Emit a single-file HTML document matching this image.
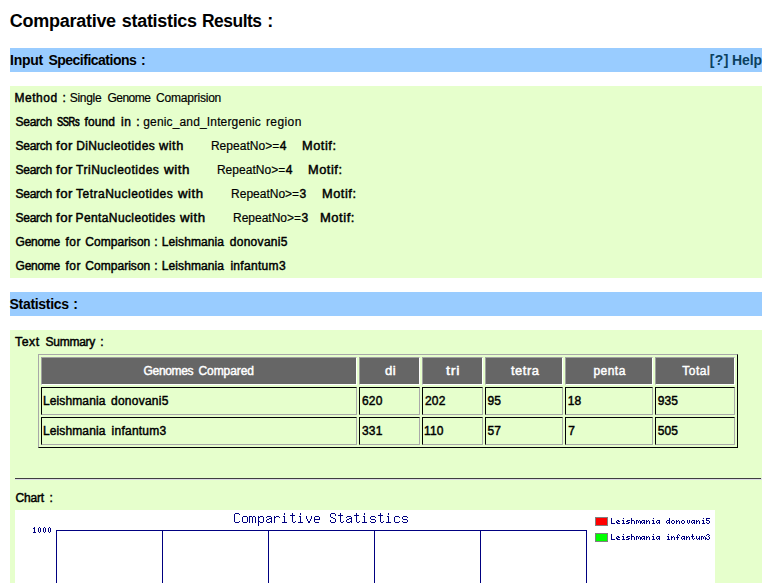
<!DOCTYPE html><html><head><meta charset="utf-8"><title>Comparative statistics Results</title><style>
html,body{margin:0;padding:0;background:#fff;}
body{width:775px;height:583px;overflow:hidden;position:relative;font-family:"Liberation Sans",sans-serif;color:#000;}
.b{position:absolute;}
.t{position:absolute;transform-origin:0 0;white-space:pre;font-weight:normal;-webkit-text-stroke:0.45px;font-size:12px;line-height:12px;}
.n{-webkit-text-stroke:0.18px;}
.f14{font-size:14px;line-height:14px;font-weight:bold;-webkit-text-stroke:0;}
.f18{font-size:18px;line-height:18px;font-weight:bold;-webkit-text-stroke:0;}
.w{color:#fff;}
.band{left:10px;width:752px;height:24px;background:#99CCFF;}
.grn{left:10px;width:752px;background:#E6FFCC;}
.c{position:absolute;box-sizing:border-box;height:28px;border:1px solid;border-color:#000 #aaa #aaa #000;}
.h{background:#666;border-color:#a0a0a0 #fff #fff #a0a0a0;}
</style></head><body>
<div class="b band" style="top:48px"></div>
<div class="b grn" style="top:86px;height:192px"></div>
<div class="b band" style="top:292px"></div>
<div class="b grn" style="top:330px;height:260px"></div>
<div class="b" style="left:38px;top:354px;width:700px;height:94px;box-sizing:border-box;border:1px solid;border-color:#a8a8a8 #000 #000 #a8a8a8"></div>
<div class="c h" style="left:41px;top:357px;width:316px"></div>
<div class="c h" style="left:359px;top:357px;width:61px"></div>
<div class="c h" style="left:422px;top:357px;width:61px"></div>
<div class="c h" style="left:485px;top:357px;width:78px"></div>
<div class="c h" style="left:565px;top:357px;width:88px"></div>
<div class="c h" style="left:655px;top:357px;width:80px"></div>
<div class="c" style="left:41px;top:387px;width:316px"></div>
<div class="c" style="left:359px;top:387px;width:61px"></div>
<div class="c" style="left:422px;top:387px;width:61px"></div>
<div class="c" style="left:485px;top:387px;width:78px"></div>
<div class="c" style="left:565px;top:387px;width:88px"></div>
<div class="c" style="left:655px;top:387px;width:80px"></div>
<div class="c" style="left:41px;top:417px;width:316px"></div>
<div class="c" style="left:359px;top:417px;width:61px"></div>
<div class="c" style="left:422px;top:417px;width:61px"></div>
<div class="c" style="left:485px;top:417px;width:78px"></div>
<div class="c" style="left:565px;top:417px;width:88px"></div>
<div class="c" style="left:655px;top:417px;width:80px"></div>
<div class="b" style="left:15px;top:478px;width:746px;height:1px;background:#404040;border-right:1px solid #dcdce4;border-bottom:1px solid #dcdce4"></div>
<svg class="b" style="left:15px;top:510px" width="700" height="73" viewBox="0 0 700 73" shape-rendering="crispEdges"><rect width="700" height="73" fill="#fff"/><path fill="#000080" d="M41 20h531v1h-531zM41 21h1v60h-1zM147 21h1v60h-1zM253 21h1v60h-1zM359 21h1v60h-1zM465 21h1v60h-1zM571 21h1v60h-1z"/><path fill="#000080" d="M220 3h4v1h-4zM269 3h1v1h-1zM277 3h1v1h-1zM285 3h1v1h-1zM316 3h4v1h-4zM325 3h1v1h-1zM341 3h1v1h-1zM349 3h1v1h-1zM365 3h1v1h-1zM373 3h1v1h-1zM219 4h1v1h-1zM224 4h1v1h-1zM269 4h1v1h-1zM277 4h1v1h-1zM285 4h1v1h-1zM315 4h1v1h-1zM320 4h1v1h-1zM325 4h1v1h-1zM341 4h1v1h-1zM349 4h1v1h-1zM365 4h1v1h-1zM373 4h1v1h-1zM219 5h1v1h-1zM275 5h5v1h-5zM315 5h1v1h-1zM320 5h1v1h-1zM323 5h5v1h-5zM339 5h5v1h-5zM363 5h5v1h-5zM219 6h1v1h-1zM228 6h4v1h-4zM234 6h3v1h-3zM238 6h2v1h-2zM243 6h1v1h-1zM245 6h3v1h-3zM252 6h4v1h-4zM259 6h1v1h-1zM261 6h3v1h-3zM268 6h2v1h-2zM277 6h1v1h-1zM284 6h2v1h-2zM291 6h1v1h-1zM296 6h1v1h-1zM300 6h4v1h-4zM315 6h1v1h-1zM325 6h1v1h-1zM332 6h4v1h-4zM341 6h1v1h-1zM348 6h2v1h-2zM356 6h4v1h-4zM365 6h1v1h-1zM372 6h2v1h-2zM380 6h4v1h-4zM388 6h4v1h-4zM219 7h1v1h-1zM227 7h1v1h-1zM232 7h1v1h-1zM234 7h1v1h-1zM237 7h1v1h-1zM240 7h1v1h-1zM243 7h2v1h-2zM248 7h1v1h-1zM251 7h1v1h-1zM256 7h1v1h-1zM259 7h2v1h-2zM264 7h1v1h-1zM269 7h1v1h-1zM277 7h1v1h-1zM285 7h1v1h-1zM291 7h1v1h-1zM296 7h1v1h-1zM299 7h1v1h-1zM304 7h1v1h-1zM316 7h2v1h-2zM325 7h1v1h-1zM331 7h1v1h-1zM336 7h1v1h-1zM341 7h1v1h-1zM349 7h1v1h-1zM355 7h1v1h-1zM360 7h1v1h-1zM365 7h1v1h-1zM373 7h1v1h-1zM379 7h1v1h-1zM384 7h1v1h-1zM387 7h1v1h-1zM392 7h1v1h-1zM219 8h1v1h-1zM227 8h1v1h-1zM232 8h1v1h-1zM234 8h1v1h-1zM237 8h1v1h-1zM240 8h1v1h-1zM243 8h1v1h-1zM248 8h1v1h-1zM254 8h3v1h-3zM259 8h1v1h-1zM269 8h1v1h-1zM277 8h1v1h-1zM285 8h1v1h-1zM291 8h1v1h-1zM296 8h1v1h-1zM299 8h1v1h-1zM304 8h1v1h-1zM318 8h2v1h-2zM325 8h1v1h-1zM334 8h3v1h-3zM341 8h1v1h-1zM349 8h1v1h-1zM355 8h1v1h-1zM365 8h1v1h-1zM373 8h1v1h-1zM379 8h1v1h-1zM387 8h1v1h-1zM219 9h1v1h-1zM227 9h1v1h-1zM232 9h1v1h-1zM234 9h1v1h-1zM237 9h1v1h-1zM240 9h1v1h-1zM243 9h1v1h-1zM248 9h1v1h-1zM252 9h2v1h-2zM256 9h1v1h-1zM259 9h1v1h-1zM269 9h1v1h-1zM277 9h1v1h-1zM285 9h1v1h-1zM292 9h1v1h-1zM295 9h1v1h-1zM299 9h6v1h-6zM320 9h1v1h-1zM325 9h1v1h-1zM332 9h2v1h-2zM336 9h1v1h-1zM341 9h1v1h-1zM349 9h1v1h-1zM356 9h4v1h-4zM365 9h1v1h-1zM373 9h1v1h-1zM379 9h1v1h-1zM388 9h4v1h-4zM219 10h1v1h-1zM227 10h1v1h-1zM232 10h1v1h-1zM234 10h1v1h-1zM237 10h1v1h-1zM240 10h1v1h-1zM243 10h1v1h-1zM248 10h1v1h-1zM251 10h1v1h-1zM256 10h1v1h-1zM259 10h1v1h-1zM269 10h1v1h-1zM277 10h1v1h-1zM285 10h1v1h-1zM292 10h1v1h-1zM295 10h1v1h-1zM299 10h1v1h-1zM315 10h1v1h-1zM320 10h1v1h-1zM325 10h1v1h-1zM331 10h1v1h-1zM336 10h1v1h-1zM341 10h1v1h-1zM349 10h1v1h-1zM360 10h1v1h-1zM365 10h1v1h-1zM373 10h1v1h-1zM379 10h1v1h-1zM392 10h1v1h-1zM219 11h1v1h-1zM224 11h1v1h-1zM227 11h1v1h-1zM232 11h1v1h-1zM234 11h1v1h-1zM237 11h1v1h-1zM240 11h1v1h-1zM243 11h2v1h-2zM248 11h1v1h-1zM251 11h1v1h-1zM255 11h2v1h-2zM259 11h1v1h-1zM269 11h1v1h-1zM277 11h1v1h-1zM280 11h1v1h-1zM285 11h1v1h-1zM293 11h2v1h-2zM299 11h1v1h-1zM315 11h1v1h-1zM320 11h1v1h-1zM325 11h1v1h-1zM328 11h1v1h-1zM331 11h1v1h-1zM335 11h2v1h-2zM341 11h1v1h-1zM344 11h1v1h-1zM349 11h1v1h-1zM355 11h1v1h-1zM360 11h1v1h-1zM365 11h1v1h-1zM368 11h1v1h-1zM373 11h1v1h-1zM379 11h1v1h-1zM384 11h1v1h-1zM387 11h1v1h-1zM392 11h1v1h-1zM220 12h4v1h-4zM228 12h4v1h-4zM234 12h1v1h-1zM237 12h1v1h-1zM240 12h1v1h-1zM243 12h1v1h-1zM245 12h3v1h-3zM252 12h3v1h-3zM256 12h1v1h-1zM259 12h1v1h-1zM267 12h5v1h-5zM278 12h2v1h-2zM283 12h5v1h-5zM293 12h2v1h-2zM300 12h4v1h-4zM316 12h4v1h-4zM326 12h2v1h-2zM332 12h3v1h-3zM336 12h1v1h-1zM342 12h2v1h-2zM347 12h5v1h-5zM356 12h4v1h-4zM366 12h2v1h-2zM371 12h5v1h-5zM380 12h4v1h-4zM388 12h4v1h-4zM243 13h1v1h-1zM243 14h1v1h-1zM243 15h1v1h-1z"/><path fill="#000080" d="M19 17h1v1h-1zM24 17h1v1h-1zM29 17h1v1h-1zM34 17h1v1h-1zM18 18h2v1h-2zM23 18h1v1h-1zM25 18h1v1h-1zM28 18h1v1h-1zM30 18h1v1h-1zM33 18h1v1h-1zM35 18h1v1h-1zM19 19h1v1h-1zM23 19h1v1h-1zM25 19h1v1h-1zM28 19h1v1h-1zM30 19h1v1h-1zM33 19h1v1h-1zM35 19h1v1h-1zM19 20h1v1h-1zM23 20h1v1h-1zM25 20h1v1h-1zM28 20h1v1h-1zM30 20h1v1h-1zM33 20h1v1h-1zM35 20h1v1h-1zM19 21h1v1h-1zM23 21h1v1h-1zM25 21h1v1h-1zM28 21h1v1h-1zM30 21h1v1h-1zM33 21h1v1h-1zM35 21h1v1h-1zM18 22h3v1h-3zM24 22h1v1h-1zM29 22h1v1h-1zM34 22h1v1h-1zM596 8h1v1h-1zM608 8h1v1h-1zM616 8h1v1h-1zM638 8h1v1h-1zM654 8h1v1h-1zM688 8h1v1h-1zM691 8h4v1h-4zM596 9h1v1h-1zM616 9h1v1h-1zM654 9h1v1h-1zM691 9h1v1h-1zM596 10h1v1h-1zM602 10h2v1h-2zM607 10h2v1h-2zM612 10h3v1h-3zM616 10h3v1h-3zM621 10h2v1h-2zM624 10h1v1h-1zM627 10h3v1h-3zM631 10h1v1h-1zM633 10h1v1h-1zM637 10h2v1h-2zM642 10h3v1h-3zM652 10h3v1h-3zM657 10h2v1h-2zM661 10h1v1h-1zM663 10h1v1h-1zM667 10h2v1h-2zM672 10h1v1h-1zM674 10h1v1h-1zM677 10h3v1h-3zM681 10h1v1h-1zM683 10h1v1h-1zM687 10h2v1h-2zM691 10h3v1h-3zM596 11h1v1h-1zM601 11h1v1h-1zM603 11h2v1h-2zM608 11h1v1h-1zM611 11h2v1h-2zM616 11h1v1h-1zM619 11h1v1h-1zM621 11h1v1h-1zM623 11h1v1h-1zM625 11h2v1h-2zM629 11h1v1h-1zM631 11h2v1h-2zM634 11h1v1h-1zM638 11h1v1h-1zM641 11h1v1h-1zM644 11h1v1h-1zM651 11h1v1h-1zM654 11h1v1h-1zM656 11h1v1h-1zM659 11h1v1h-1zM661 11h2v1h-2zM664 11h1v1h-1zM666 11h1v1h-1zM669 11h1v1h-1zM672 11h1v1h-1zM674 11h1v1h-1zM676 11h1v1h-1zM679 11h1v1h-1zM681 11h2v1h-2zM684 11h1v1h-1zM688 11h1v1h-1zM694 11h1v1h-1zM596 12h1v1h-1zM601 12h2v1h-2zM608 12h1v1h-1zM613 12h2v1h-2zM616 12h1v1h-1zM619 12h1v1h-1zM621 12h1v1h-1zM623 12h1v1h-1zM625 12h2v1h-2zM628 12h2v1h-2zM631 12h1v1h-1zM634 12h1v1h-1zM638 12h1v1h-1zM641 12h1v1h-1zM643 12h2v1h-2zM651 12h1v1h-1zM653 12h2v1h-2zM656 12h1v1h-1zM659 12h1v1h-1zM661 12h1v1h-1zM664 12h1v1h-1zM666 12h1v1h-1zM669 12h1v1h-1zM672 12h1v1h-1zM674 12h1v1h-1zM676 12h1v1h-1zM678 12h2v1h-2zM681 12h1v1h-1zM684 12h1v1h-1zM688 12h1v1h-1zM691 12h1v1h-1zM694 12h1v1h-1zM596 13h4v1h-4zM602 13h3v1h-3zM607 13h3v1h-3zM611 13h3v1h-3zM616 13h1v1h-1zM619 13h1v1h-1zM621 13h1v1h-1zM625 13h1v1h-1zM627 13h1v1h-1zM629 13h1v1h-1zM631 13h1v1h-1zM634 13h1v1h-1zM637 13h3v1h-3zM642 13h1v1h-1zM644 13h1v1h-1zM652 13h1v1h-1zM654 13h1v1h-1zM657 13h2v1h-2zM661 13h1v1h-1zM664 13h1v1h-1zM667 13h2v1h-2zM673 13h1v1h-1zM677 13h1v1h-1zM679 13h1v1h-1zM681 13h1v1h-1zM684 13h1v1h-1zM687 13h3v1h-3zM692 13h2v1h-2zM596 24h1v1h-1zM608 24h1v1h-1zM616 24h1v1h-1zM638 24h1v1h-1zM653 24h1v1h-1zM663 24h1v1h-1zM677 24h1v1h-1zM692 24h2v1h-2zM596 25h1v1h-1zM616 25h1v1h-1zM662 25h1v1h-1zM664 25h1v1h-1zM677 25h1v1h-1zM691 25h1v1h-1zM694 25h1v1h-1zM596 26h1v1h-1zM602 26h2v1h-2zM607 26h2v1h-2zM612 26h3v1h-3zM616 26h3v1h-3zM621 26h2v1h-2zM624 26h1v1h-1zM627 26h3v1h-3zM631 26h1v1h-1zM633 26h1v1h-1zM637 26h2v1h-2zM642 26h3v1h-3zM652 26h2v1h-2zM656 26h1v1h-1zM658 26h1v1h-1zM662 26h1v1h-1zM667 26h3v1h-3zM671 26h1v1h-1zM673 26h1v1h-1zM676 26h3v1h-3zM681 26h1v1h-1zM684 26h1v1h-1zM686 26h2v1h-2zM689 26h1v1h-1zM693 26h1v1h-1zM596 27h1v1h-1zM601 27h1v1h-1zM603 27h2v1h-2zM608 27h1v1h-1zM611 27h2v1h-2zM616 27h1v1h-1zM619 27h1v1h-1zM621 27h1v1h-1zM623 27h1v1h-1zM625 27h2v1h-2zM629 27h1v1h-1zM631 27h2v1h-2zM634 27h1v1h-1zM638 27h1v1h-1zM641 27h1v1h-1zM644 27h1v1h-1zM653 27h1v1h-1zM656 27h2v1h-2zM659 27h1v1h-1zM661 27h3v1h-3zM666 27h1v1h-1zM669 27h1v1h-1zM671 27h2v1h-2zM674 27h1v1h-1zM677 27h1v1h-1zM681 27h1v1h-1zM684 27h1v1h-1zM686 27h1v1h-1zM688 27h1v1h-1zM690 27h1v1h-1zM694 27h1v1h-1zM596 28h1v1h-1zM601 28h2v1h-2zM608 28h1v1h-1zM613 28h2v1h-2zM616 28h1v1h-1zM619 28h1v1h-1zM621 28h1v1h-1zM623 28h1v1h-1zM625 28h2v1h-2zM628 28h2v1h-2zM631 28h1v1h-1zM634 28h1v1h-1zM638 28h1v1h-1zM641 28h1v1h-1zM643 28h2v1h-2zM653 28h1v1h-1zM656 28h1v1h-1zM659 28h1v1h-1zM662 28h1v1h-1zM666 28h1v1h-1zM668 28h2v1h-2zM671 28h1v1h-1zM674 28h1v1h-1zM677 28h1v1h-1zM679 28h1v1h-1zM681 28h1v1h-1zM683 28h2v1h-2zM686 28h1v1h-1zM688 28h1v1h-1zM690 28h2v1h-2zM694 28h1v1h-1zM596 29h4v1h-4zM602 29h3v1h-3zM607 29h3v1h-3zM611 29h3v1h-3zM616 29h1v1h-1zM619 29h1v1h-1zM621 29h1v1h-1zM625 29h1v1h-1zM627 29h1v1h-1zM629 29h1v1h-1zM631 29h1v1h-1zM634 29h1v1h-1zM637 29h3v1h-3zM642 29h1v1h-1zM644 29h1v1h-1zM652 29h3v1h-3zM656 29h1v1h-1zM659 29h1v1h-1zM662 29h1v1h-1zM667 29h1v1h-1zM669 29h1v1h-1zM671 29h1v1h-1zM674 29h1v1h-1zM678 29h1v1h-1zM682 29h1v1h-1zM684 29h1v1h-1zM686 29h1v1h-1zM690 29h1v1h-1zM692 29h2v1h-2z"/><rect x="580" y="7" width="13" height="9" fill="#808080"/><rect x="581" y="8" width="11" height="7" fill="#f00"/><rect x="580" y="23" width="13" height="9" fill="#808080"/><rect x="581" y="24" width="11" height="7" fill="#0f0"/></svg>
<span class="t f18" style="left:9.8px;top:12px;letter-spacing:-0.27px">Comparative</span>
<span class="t f18" style="left:121.8px;top:12px;letter-spacing:-0.311px">statistics</span>
<span class="t f18" style="left:202.23px;top:12px;letter-spacing:-0.5px;transform:scaleX(0.967)">Results</span>
<span class="t f18" style="left:267.3px;top:12px">:</span>
<span class="t f14" style="left:10.1px;top:53px;letter-spacing:-0.3px">Input</span>
<span class="t f14" style="left:48.4px;top:53px;letter-spacing:-0.5px">Specifications</span>
<span class="t f14" style="left:141.1px;top:53px">:</span>
<span class="t f14" style="left:709.8px;top:53px;letter-spacing:0.4px;color:#0b4060">[?]</span>
<span class="t f14" style="left:732px;top:53px;letter-spacing:-0.067px;color:#0b4060">Help</span>
<span class="t f14" style="left:9.6px;top:297px;letter-spacing:-0.322px">Statistics</span>
<span class="t f14" style="left:73.2px;top:297px">:</span>
<span class="t" style="left:14.6px;top:92px;letter-spacing:0.5px">Method</span>
<span class="t" style="left:62.6px;top:92px">:</span>
<span class="t n" style="left:69.7px;top:92px;letter-spacing:-0.28px">Single</span>
<span class="t n" style="left:107.4px;top:92px;letter-spacing:-0.5px">Genome</span>
<span class="t n" style="left:156.1px;top:92px;letter-spacing:-0.22px">Comaprision</span>
<span class="t" style="left:15.6px;top:116px;letter-spacing:-0.3px">Search</span>
<span class="t" style="left:56.7px;top:116px;letter-spacing:-0.5px;transform:scaleX(0.773);-webkit-text-stroke:0.65px">SSRs</span>
<span class="t" style="left:84.6px;top:116px;letter-spacing:0.05px">found</span>
<span class="t" style="left:121.1px;top:116px;letter-spacing:0.5px">in</span>
<span class="t" style="left:136.3px;top:116px">:</span>
<span class="t n" style="left:143.3px;top:116px;letter-spacing:0.147px">genic_and_Intergenic</span>
<span class="t n" style="left:265.9px;top:116px;letter-spacing:0.42px">region</span>
<span class="t" style="left:15.6px;top:140px;letter-spacing:-0.3px">Search</span>
<span class="t" style="left:56px;top:140px;letter-spacing:0.5px;transform:scaleX(1.1)">for</span>
<span class="t" style="left:76.2px;top:140px;letter-spacing:0.375px">DiNucleotides</span>
<span class="t" style="left:158.9px;top:140px;letter-spacing:0.5px;transform:scaleX(1.062)">with</span>
<span class="t n" style="left:210.9px;top:140px;letter-spacing:0.044px">RepeatNo&gt;=</span>
<span class="t" style="left:279.8px;top:140px">4</span>
<span class="t" style="left:302.13px;top:140px;letter-spacing:0.5px;transform:scaleX(1.066)">Motif:</span>
<span class="t" style="left:15.6px;top:164px;letter-spacing:-0.3px">Search</span>
<span class="t" style="left:56px;top:164px;letter-spacing:0.5px;transform:scaleX(1.1)">for</span>
<span class="t" style="left:76.1px;top:164px;letter-spacing:0.5px">TriNucleotides</span>
<span class="t" style="left:163.6px;top:164px;letter-spacing:0.5px;transform:scaleX(1.116)">with</span>
<span class="t n" style="left:216.9px;top:164px;letter-spacing:0.044px">RepeatNo&gt;=</span>
<span class="t" style="left:285.65px;top:164px">4</span>
<span class="t" style="left:307.93px;top:164px;letter-spacing:0.5px;transform:scaleX(1.066)">Motif:</span>
<span class="t" style="left:15.6px;top:188px;letter-spacing:-0.3px">Search</span>
<span class="t" style="left:56px;top:188px;letter-spacing:0.5px;transform:scaleX(1.1)">for</span>
<span class="t" style="left:76.1px;top:188px;letter-spacing:0.487px">TetraNucleotides</span>
<span class="t" style="left:178px;top:188px;letter-spacing:0.5px;transform:scaleX(1.098)">with</span>
<span class="t n" style="left:231.1px;top:188px;letter-spacing:-0.011px">RepeatNo&gt;=</span>
<span class="t" style="left:299.6px;top:188px">3</span>
<span class="t" style="left:321.83px;top:188px;letter-spacing:0.5px;transform:scaleX(1.066)">Motif:</span>
<span class="t" style="left:15.6px;top:212px;letter-spacing:-0.3px">Search</span>
<span class="t" style="left:56px;top:212px;letter-spacing:0.5px;transform:scaleX(1.1)">for</span>
<span class="t" style="left:75.6px;top:212px;letter-spacing:0.38px">PentaNucleotides</span>
<span class="t" style="left:179.9px;top:212px;letter-spacing:0.5px;transform:scaleX(1.102)">with</span>
<span class="t n" style="left:233px;top:212px;letter-spacing:-0.011px">RepeatNo&gt;=</span>
<span class="t" style="left:301.4px;top:212px">3</span>
<span class="t" style="left:319.52px;top:212px;letter-spacing:0.5px;transform:scaleX(1.082)">Motif:</span>
<span class="t" style="left:15.6px;top:236px;letter-spacing:-0.28px">Genome</span>
<span class="t" style="left:65.6px;top:236px;letter-spacing:0.4px">for</span>
<span class="t" style="left:85.3px;top:236px;letter-spacing:0.033px">Comparison</span>
<span class="t" style="left:154.25px;top:236px">:</span>
<span class="t" style="left:161.8px;top:236px;letter-spacing:0.089px">Leishmania</span>
<span class="t" style="left:229.7px;top:236px;letter-spacing:0.3px">donovani5</span>
<span class="t" style="left:15.6px;top:260px;letter-spacing:-0.28px">Genome</span>
<span class="t" style="left:65.6px;top:260px;letter-spacing:0.4px">for</span>
<span class="t" style="left:85.3px;top:260px;letter-spacing:0.033px">Comparison</span>
<span class="t" style="left:154.25px;top:260px">:</span>
<span class="t" style="left:161.8px;top:260px;letter-spacing:0.089px">Leishmania</span>
<span class="t" style="left:230.4px;top:260px;letter-spacing:0.313px">infantum3</span>
<span class="t" style="left:15.4px;top:336px;letter-spacing:0.5px;transform:scaleX(1.024)">Text</span>
<span class="t" style="left:45.6px;top:336px;letter-spacing:-0.283px">Summary</span>
<span class="t" style="left:100.3px;top:336px">:</span>
<span class="t" style="left:15.5px;top:492px;letter-spacing:-0.175px">Chart</span>
<span class="t" style="left:49.45px;top:492px">:</span>
<span class="t w" style="left:143.6px;top:365px;letter-spacing:-0.35px">Genomes</span>
<span class="t w" style="left:198.5px;top:365px;letter-spacing:-0.071px">Compared</span>
<span class="t w" style="left:384.7px;top:365px;letter-spacing:0.5px;transform:scaleX(1.095)">di</span>
<span class="t w" style="left:445.7px;top:365px;letter-spacing:0.5px;transform:scaleX(1.218)">tri</span>
<span class="t w" style="left:510.7px;top:365px;letter-spacing:0.5px;transform:scaleX(1.073)">tetra</span>
<span class="t w" style="left:593.5px;top:365px;letter-spacing:0.45px">penta</span>
<span class="t w" style="left:682.3px;top:365px;letter-spacing:0.5px">Total</span>
<span class="t" style="left:43px;top:395px;letter-spacing:0.111px">Leishmania</span>
<span class="t" style="left:111px;top:395px;letter-spacing:0.25px">donovani5</span>
<span class="t" style="left:362px;top:395px;letter-spacing:0.15px">620</span>
<span class="t" style="left:425px;top:395px;letter-spacing:0.15px">202</span>
<span class="t" style="left:487.5px;top:395px;letter-spacing:0.15px">95</span>
<span class="t" style="left:567.7px;top:395px;letter-spacing:0.15px">18</span>
<span class="t" style="left:657.7px;top:395px;letter-spacing:0.15px">935</span>
<span class="t" style="left:43px;top:425px;letter-spacing:0.111px">Leishmania</span>
<span class="t" style="left:111.6px;top:425px;letter-spacing:0.237px">infantum3</span>
<span class="t" style="left:362px;top:425px;letter-spacing:0.15px">331</span>
<span class="t" style="left:424px;top:425px;letter-spacing:0.15px">110</span>
<span class="t" style="left:487.5px;top:425px;letter-spacing:0.15px">57</span>
<span class="t" style="left:568.25px;top:425px">7</span>
<span class="t" style="left:657.7px;top:425px;letter-spacing:0.15px">505</span>
</body></html>
